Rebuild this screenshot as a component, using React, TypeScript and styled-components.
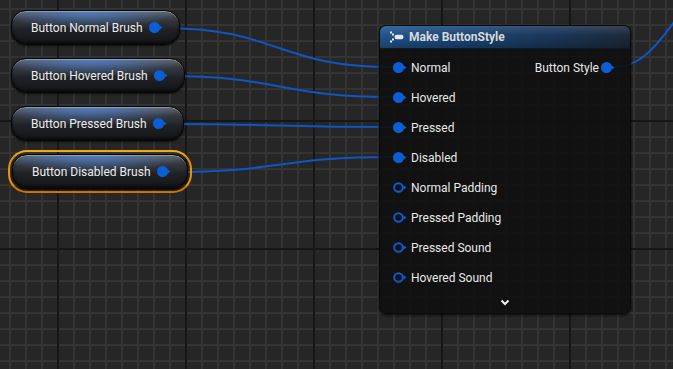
import styled, { createGlobalStyle } from 'styled-components';

const GlobalStyle = createGlobalStyle`
  html, body {
    margin: 0;
    padding: 0;
    background: #262626;
  }
  * {
    box-sizing: border-box;
  }
`;

const Graph = styled.div`
  position: relative;
  width: 673px;
  height: 369px;
  overflow: hidden;
  font-family: Roboto, 'Liberation Sans', sans-serif;
  background-color: #262626;
  background-image:
    linear-gradient(to right, #161616 2px, transparent 2px),
    linear-gradient(to bottom, #161616 2px, transparent 2px),
    linear-gradient(to right, #343434 2px, transparent 2px),
    linear-gradient(to bottom, #343434 2px, transparent 2px);
  background-size: 128px 128px, 128px 128px, 16px 16px, 16px 16px;
  background-position: 57px 0, 0 120px, 9px 0, 0 8px;
`;

const Wires = styled.svg`
  position: absolute;
  left: 0;
  top: 0;
  pointer-events: none;
`;

const NodeSlot = styled.div<{ $x: number; $y: number }>`
  position: absolute;
  left: ${(p) => p.$x}px;
  top: ${(p) => p.$y}px;
`;

const Selection = styled.div`
  padding: 2px;
  border: 2px solid #e99400;
  border-radius: 19px;
  border-top-color: #f5aa10;
  border-bottom-color: #d37400;
`;

const VarNode = styled.div`
  display: flex;
  align-items: center;
  gap: 6px;
  height: 35px;
  padding: 0 16px 0 19px;
  border-radius: 15px;
  border: 1px solid #050505;
  color: #ececec;
  font-size: 12px;
  background:
    radial-gradient(ellipse 55% 55% at 45% 0%, rgba(80, 130, 205, 0.85), rgba(40, 70, 120, 0) 100%),
    linear-gradient(to bottom, #63666b 0%, #363a40 25%, #1f2124 58%, #141517 100%);
  box-shadow:
    inset 0 1px 0 rgba(255, 255, 255, 0.32),
    inset 0 -2px 3px rgba(0, 0, 0, 0.5),
    0 1px 2px rgba(0, 0, 0, 0.7);
`;

const Pin = ({ hollow = false }: { hollow?: boolean }) => (
  <svg width="14" height="11" viewBox="0 0 14 11" style={{ flex: 'none' }}>
    {hollow ? (
      <circle cx="5.5" cy="5.5" r="4.3" fill="none" stroke="#0a5bd0" strokeWidth="2" />
    ) : (
      <circle cx="5.5" cy="5.5" r="5.5" fill="#0b5ed6" />
    )}
    <polygon points="10.5,3.3 13.5,5.5 10.5,7.7" fill="#0b5ed6" />
  </svg>
);

const MakeNode = styled.div`
  width: 252px;
  height: 289px;
  display: flex;
  flex-direction: column;
  border-radius: 7px;
  border: 1px solid #0a0a0a;
  background: rgba(14, 16, 14, 0.9);
  box-shadow: 0 1px 3px rgba(0, 0, 0, 0.8);
  overflow: hidden;
`;

const Header = styled.div`
  display: flex;
  align-items: center;
  gap: 5px;
  height: 24px;
  padding: 1px 0 0 10px;
  color: #d8d8d8;
  font-size: 12px;
  font-weight: 700;
  background:
    linear-gradient(to bottom, rgba(255, 255, 255, 0.12), rgba(255, 255, 255, 0) 40%, rgba(0, 0, 0, 0.25)),
    linear-gradient(to right, #21558f 0%, #1b4677 35%, #1b3555 75%, #1d2a3a 100%);
  border-bottom: 1px solid #0a1828;
`;

const Body = styled.div`
  flex: 1;
  display: flex;
  justify-content: space-between;
  padding: 4px 15px 0 13px;
`;

const PinColumn = styled.div`
  display: flex;
  flex-direction: column;
`;

const PinRow = styled.div<{ $out?: boolean }>`
  display: flex;
  align-items: center;
  flex-direction: ${(p) => (p.$out ? 'row-reverse' : 'row')};
  gap: ${(p) => (p.$out ? 2 : 4)}px;
  height: 30px;
  color: #e8e8e8;
  font-size: 12px;
`;

const Footer = styled.div`
  height: 21px;
  display: flex;
  justify-content: center;
  align-items: center;
`;

const inputs: { label: string; linked: boolean }[] = [
  { label: 'Normal', linked: true },
  { label: 'Hovered', linked: true },
  { label: 'Pressed', linked: true },
  { label: 'Disabled', linked: true },
  { label: 'Normal Padding', linked: false },
  { label: 'Pressed Padding', linked: false },
  { label: 'Pressed Sound', linked: false },
  { label: 'Hovered Sound', linked: false },
];

const brushes = [
  { label: 'Button Normal Brush', y: 10 },
  { label: 'Button Hovered Brush', y: 58 },
  { label: 'Button Pressed Brush', y: 106 },
];

const wire = (x1: number, y1: number, x2: number, y2: number) => {
  const d = Math.max(60, (x2 - x1) * 0.5);
  return `M ${x1} ${y1} C ${x1 + d} ${y1}, ${x2 - d} ${y2}, ${x2} ${y2}`;
};

const App = () => {
  return (
    <>
      <GlobalStyle />
      <Graph>
        <Wires width="673" height="369">
          <g fill="none" stroke="#0d56c4" strokeWidth="2">
            <path d={wire(163, 28, 392, 67)} />
            <path d={wire(167, 76, 392, 97)} />
            <path d={wire(165, 124, 392, 127)} />
            <path d={wire(170, 172, 392, 157)} />
            <path d="M 614 67 C 640 67, 655 50, 690 0" />
          </g>
        </Wires>

        {brushes.map((b) => (
          <NodeSlot key={b.label} $x={11} $y={b.y}>
            <VarNode>
              {b.label}
              <Pin />
            </VarNode>
          </NodeSlot>
        ))}

        <NodeSlot $x={8} $y={150}>
          <Selection>
            <VarNode>
              Button Disabled Brush
              <Pin />
            </VarNode>
          </Selection>
        </NodeSlot>

        <NodeSlot $x={379} $y={25}>
          <MakeNode>
            <Header>
              <svg width="14" height="12" viewBox="0 0 14 12">
                <g fill="#e8e8e8">
                  <rect x="0" y="0.5" width="2" height="2" />
                  <rect x="2" y="2.5" width="2" height="2" />
                  <rect x="2" y="7.5" width="2" height="2" />
                  <rect x="0" y="9.5" width="2" height="2" />
                  <rect x="4.5" y="3.8" width="9" height="4.4" rx="2.2" />
                </g>
              </svg>
              Make ButtonStyle
            </Header>
            <Body>
              <PinColumn>
                {inputs.map((i) => (
                  <PinRow key={i.label}>
                    <Pin hollow={!i.linked} />
                    {i.label}
                  </PinRow>
                ))}
              </PinColumn>
              <PinColumn>
                <PinRow $out>
                  <Pin />
                  Button Style
                </PinRow>
              </PinColumn>
            </Body>
            <Footer>
              <svg width="10" height="7" viewBox="0 0 10 7">
                <polyline points="1.5,1.5 5,5 8.5,1.5" fill="none" stroke="#f0f0f0" strokeWidth="2" />
              </svg>
            </Footer>
          </MakeNode>
        </NodeSlot>
      </Graph>
    </>
  );
};

export default App;
